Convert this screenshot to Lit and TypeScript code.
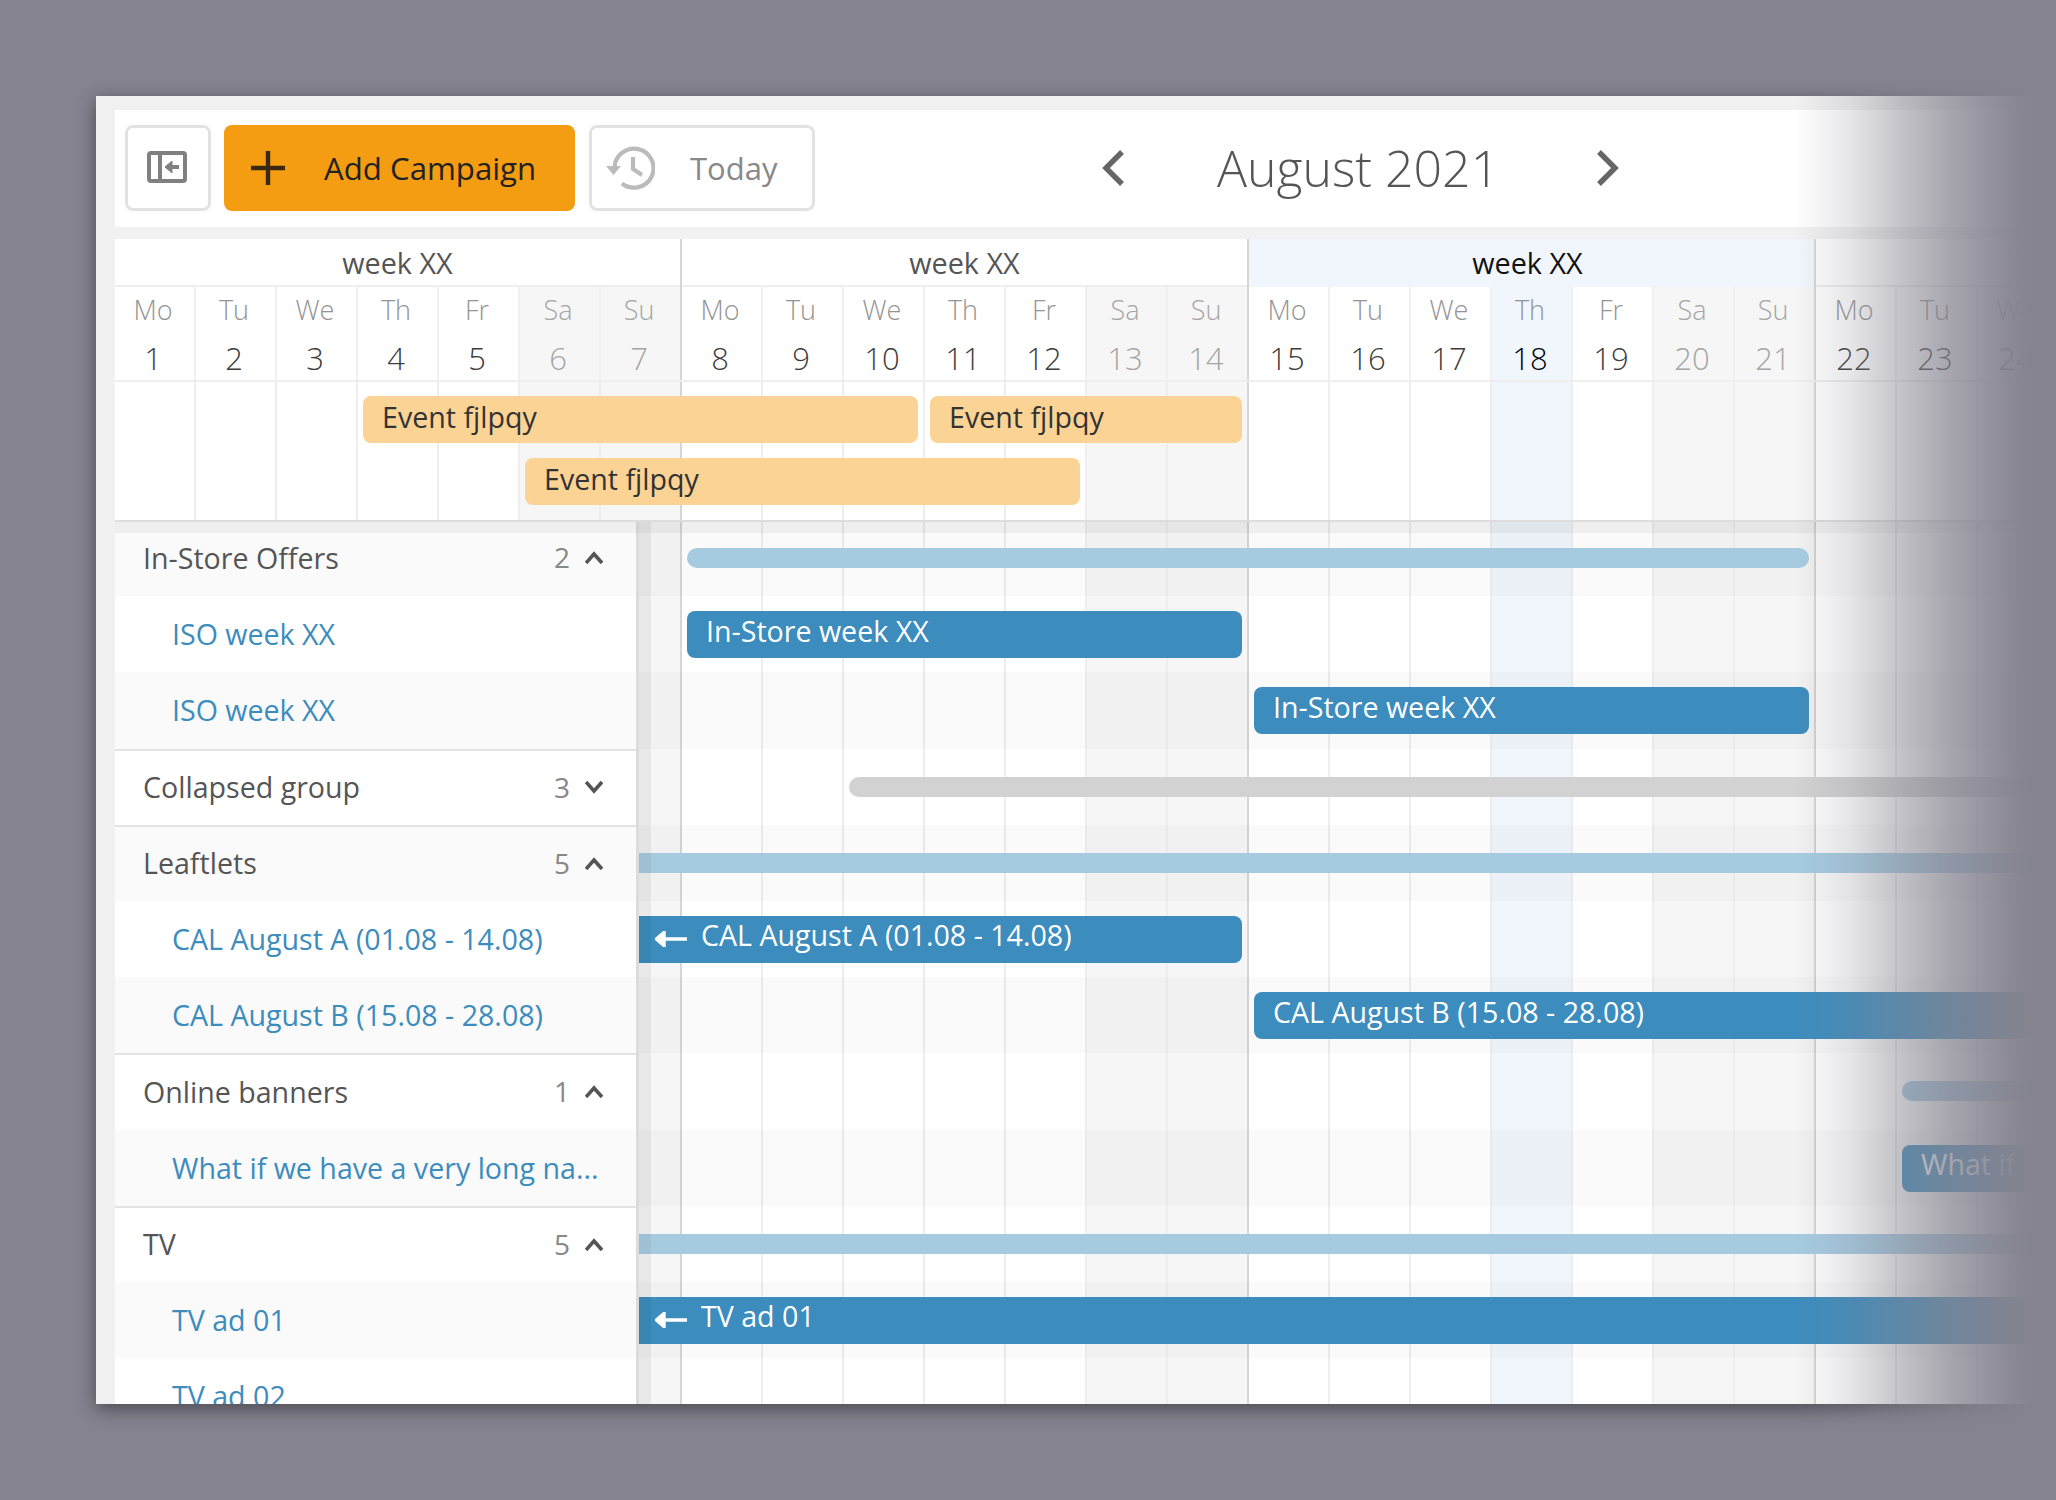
import { LitElement, html, css, svg } from "lit";
import { customElement } from "lit/decorators.js";
import { classMap } from "lit/directives/class-map.js";

const DOW = ["Mo", "Tu", "We", "Th", "Fr", "Sa", "Su"];
const DAYS = Array.from({ length: 24 }, (_, i) => ({
  n: i + 1,
  dow: DOW[i % 7],
  weekend: i % 7 >= 5,
  weekStart: i % 7 === 0 && i > 0,
  first: i === 0,
  today: i === 17,
}));

type Side = { label: string; count?: number; open?: boolean; group?: boolean };
const SIDE: Side[] = [
  { label: "In-Store Offers", count: 2, open: true, group: true },
  { label: "ISO week XX" },
  { label: "ISO week XX" },
  { label: "Collapsed group", count: 3, open: false, group: true },
  { label: "Leaftlets", count: 5, open: true, group: true },
  { label: "CAL August A (01.08 - 14.08)" },
  { label: "CAL August B (15.08 - 28.08)" },
  { label: "Online banners", count: 1, open: true, group: true },
  { label: "What if we have a very long na..." },
  { label: "TV", count: 5, open: true, group: true },
  { label: "TV ad 01" },
  { label: "TV ad 02" },
];

type Bar = { row: number; from: number; to: number; kind: string; label?: string; cut?: boolean; open?: boolean };
const BARS: Bar[] = [
  { row: 0, from: 7, to: 21, kind: "sum" },
  { row: 1, from: 7, to: 14, kind: "main", label: "In-Store week XX" },
  { row: 2, from: 14, to: 21, kind: "main", label: "In-Store week XX" },
  { row: 3, from: 9, to: 24, kind: "sum grey", open: true },
  { row: 4, from: 6, to: 24, kind: "sum", cut: true, open: true },
  { row: 5, from: 6, to: 14, kind: "main", label: "CAL August A (01.08 - 14.08)", cut: true },
  { row: 6, from: 14, to: 24, kind: "main", label: "CAL August B (15.08 - 28.08)", open: true },
  { row: 7, from: 22, to: 24, kind: "sum", open: true },
  { row: 8, from: 22, to: 24, kind: "main", label: "What if", open: true },
  { row: 9, from: 6, to: 24, kind: "sum", cut: true, open: true },
  { row: 10, from: 6, to: 24, kind: "main", label: "TV ad 01", cut: true, open: true },
];

const leftArrow = svg`<svg class="arrow" viewBox="0 0 32 16"><path d="M32 8H7M9 1.5 1.5 8 9 14.5z" fill="#fff" stroke="#fff" stroke-width="3.4"/></svg>`;

@customElement("app-root")
export class AppRoot extends LitElement {
  static styles = css`
    :host {
      display: block;
      position: relative;
      height: 1500px;
      overflow: hidden;
      background: #85838f;
      font-family: "Open Sans", "Liberation Sans", sans-serif;
      font-size: 28.6px;
      color: #555;
    }
    .page { padding: 96px 0 0 96px; }
    .card {
      box-sizing: border-box;
      width: 1960px;
      height: 1308px;
      padding: 14px 0 0 19px;
      background: #f1f1f1;
      overflow: hidden;
      box-shadow: 0 5px 18px rgba(0, 0, 0, 0.45);
    }
    .toolbar {
      box-sizing: border-box;
      display: flex;
      align-items: center;
      height: 117px;
      padding: 0 0 2px 10px;
      background: #fff;
    }
    .btn {
      box-sizing: border-box;
      display: flex;
      align-items: center;
      height: 86px;
      border: 3px solid #e2e2e2;
      border-radius: 8px;
      background: #fff;
    }
    .btn.icon { width: 86px; justify-content: center; padding: 0 2px 2px 0; margin-right: 13px; }
    .btn.add {
      width: 351px;
      margin-right: 14px;
      padding-left: 27px;
      border: 0;
      background: #f49d12;
      color: #222;
      font-size: 31.2px;
    }
    .btn.add span { margin-left: 39px; }
    .btn.today { width: 226px; padding-left: 13px; color: #888; font-size: 31px; }
    .btn.today span { margin-left: 35px; }
    .month {
      display: flex;
      align-items: center;
      margin-left: 286px;
    }
    .month .title {
      width: 275px;
      margin: 0 104px 0 92px;
      font-size: 50px;
      font-weight: 300;
      color: #555;
      white-space: nowrap;
      line-height: 60px;
    }
    .cal { margin-top: 12px; background: #fff; }
    .head { position: relative; z-index: 3; background: #fff; }
    .head::after {
      content: "";
      position: absolute;
      left: 0;
      right: 0;
      top: 100%;
      height: 11px;
      background: rgba(0, 0, 0, 0.045);
    }
    .weeks {
      display: grid;
      grid-template-columns: 565px repeat(3, 567px);
      height: 48px;
      box-sizing: border-box;
      border-bottom: 2px solid #eee;
    }
    .week {
      box-sizing: border-box;
      text-align: center;
      line-height: 48px;
      font-size: 28.8px;
      color: #555;
      white-space: nowrap;
    }
    .week.line { border-left: 2px solid #d6d6d6; }
    .week.cur { background: #f1f6fd; color: #111; padding-right: 8px; }
    .cols28 {
      display: grid;
      grid-template-columns: 79px repeat(23, 81px);
    }
    .days {
      height: 95px;
      box-sizing: border-box;
      border-bottom: 2px solid #eee;
    }
    .day {
      box-sizing: border-box;
      display: flex;
      flex-direction: column;
      align-items: center;
      padding-right: 3px;
      border-left: 2px solid #f0f0f0;
    }
    .day .dow { font-size: 27px; line-height: 36px; margin-top: 5px; color: #949494; font-weight: 300; }
    .day .num { font-size: 31px; line-height: 40px; margin-top: 10px; color: #3c3c3c; font-weight: 350; }
    .day.we { background: #f6f6f6; }
    .day.we .dow, .day.we .num { color: #a5a5a5; }
    .day.today { background: #f1f6fd; }
    .day.today .num { color: #000; }
    .day.first, .col.first { border-left: 0; }
    .day.ws, .col.ws { border-left: 2px solid #d6d6d6; }
    .col {
      box-sizing: border-box;
      grid-row: 1 / -1;
      border-left: 2px solid #eee;
    }
    .col.we { background: #f6f6f6; }
    .col.today { background: #f1f6fd; }
    .events {
      grid-template-rows: 62px 76px;
      height: 140px;
      box-sizing: border-box;
      border-bottom: 2px solid #ddd;
    }
    .ev {
      display: flex;
      align-items: center;
      box-sizing: border-box;
      height: 47px;
      margin: 14px 5px 0 7px;
      padding: 0 20px 6px 19px;
      border-radius: 8px;
      background: #fbd394;
      color: #333;
      align-self: start;
      white-space: nowrap;
      z-index: 1;
    }
    .body {
      margin-top: -2px;
      grid-template-rows: repeat(12, 76.2px);
    }
    .stripe {
      grid-column: 1 / -1;
      background: rgba(0, 0, 0, 0.02);
    }
    .bar {
      align-self: start;
      box-sizing: border-box;
      margin: 15px 5px 0 7px;
      height: 47px;
      display: flex;
      align-items: center;
      padding: 0 20px 9px 19px;
      border-radius: 8px;
      background: #3c8cbd;
      color: #fff;
      white-space: nowrap;
      overflow: hidden;
      z-index: 1;
    }
    .bar.sum {
      margin-top: 28px;
      height: 20px;
      padding: 0;
      border-radius: 10px;
      background: #a6cbe1;
    }
    .bar.grey { background: #d2d2d2; }
    .bar.cut {
      margin-left: 39px;
      border-top-left-radius: 0;
      border-bottom-left-radius: 0;
      padding-left: 17px;
    }
    .bar.open { margin-right: 0; border-top-right-radius: 0; border-bottom-right-radius: 0; }
    .arrow { flex: none; width: 32px; height: 16px; margin: 9px 14px 0 0; }
    .side {
      grid-row: 1 / -1;
      grid-column: 1 / 8;
      width: 524px;
      box-sizing: border-box;
      position: relative;
      display: grid;
      grid-template-rows: repeat(12, 76.2px);
      border-right: 3px solid #dcdcdc;
      background: #fff;
      z-index: 2;
    }
    .side::after {
      content: "";
      position: absolute;
      left: 100%;
      top: 0;
      bottom: 0;
      width: 12px;
      margin-left: 3px;
      background: rgba(0, 0, 0, 0.05);
    }
    .row {
      box-sizing: border-box;
      display: flex;
      align-items: center;
      padding: 0 0 1px 57px;
      min-width: 0;
      color: #3c8cbd;
    }
    .row.z { background: #fafafa; }
    .row.group { padding: 0 31px 2px 28px; color: #555; }
    .row.sep { border-top: 2px solid #e2e2e2; }
    .row .text { flex: 1; white-space: nowrap; }
    .count { color: #888; margin-right: 15px; font-size: 28px; }
    .chev { display: block; }
    .fade {
      position: absolute;
      top: 0;
      bottom: 0;
      left: 1790px;
      right: 0;
      z-index: 9;
      background: linear-gradient(
        to right,
        rgba(133, 131, 143, 0) 5px,
        rgba(133, 131, 143, 0.2) 60px,
        rgba(133, 131, 143, 0.48) 110px,
        rgba(133, 131, 143, 0.72) 160px,
        rgba(133, 131, 143, 0.93) 215px,
        rgba(133, 131, 143, 1) 242px
      );
    }
  `;

  private colCells() {
    return DAYS.map(
      (d, i) => html`<div
        class=${classMap({ col: true, we: d.weekend, ws: d.weekStart, first: d.first, today: d.today })}
        style="grid-column:${i + 1}"
      ></div>`
    );
  }

  render() {
    return html`
      <div class="page">
        <div class="card">
          <div class="toolbar">
            <div class="btn icon">
              <svg width="40" height="32" viewBox="0 0 40 32" fill="none" stroke="#808080" stroke-width="4">
                <rect x="2" y="2" width="36" height="28" rx="2" />
                <path d="M13 2v28" />
                <path d="M32 16H20" />
                <path d="M25 10l-7 6 7 6z" fill="#808080" stroke-width="1" />
              </svg>
            </div>
            <div class="btn add">
              <svg width="34" height="34" viewBox="0 0 34 34" stroke="#3a2a10" stroke-width="4.4"><path d="M17 0v34M0 17h34" /></svg>
              <span>Add Campaign</span>
            </div>
            <div class="btn today">
              <svg width="50" height="44" viewBox="0 0 50 44" fill="none" stroke="#bbb" stroke-width="4.2">
                <path d="M9.5 22A19.5 19.5 0 1 1 17 37.5" />
                <path d="M1 20h15l-7.5 9z" fill="#bbb" stroke="none" />
                <path d="M28 11v12l9 6" />
              </svg>
              <span>Today</span>
            </div>
            <div class="month">
              <svg width="24" height="36" viewBox="0 0 24 36" fill="none" stroke="#666" stroke-width="5.4"><path d="M21 2 5 18l16 16" /></svg>
              <div class="title">August 2021</div>
              <svg width="24" height="36" viewBox="0 0 24 36" fill="none" stroke="#666" stroke-width="5.4"><path d="M3 2l16 16L3 34" /></svg>
            </div>
          </div>
          <div class="cal">
            <div class="head">
              <div class="weeks">
                <div class="week">week XX</div>
                <div class="week line">week XX</div>
                <div class="week line cur">week XX</div>
                <div class="week line"></div>
              </div>
              <div class="cols28 days">
                ${DAYS.map(
                  (d) => html`<div class=${classMap({ day: true, we: d.weekend, ws: d.weekStart, first: d.first, today: d.today })}>
                    <span class="dow">${d.dow}</span><span class="num">${d.n}</span>
                  </div>`
                )}
              </div>
              <div class="cols28 events">
                ${this.colCells()}
                <div class="ev" style="grid-column:4 / 11;grid-row:1">Event fjlpqy</div>
                <div class="ev" style="grid-column:11 / 15;grid-row:1">Event fjlpqy</div>
                <div class="ev" style="grid-column:6 / 13;grid-row:2">Event fjlpqy</div>
              </div>
            </div>
            <div class="cols28 body">
              ${this.colCells()}
              ${SIDE.map((_, i) => (i % 2 === 0 ? html`<div class="stripe" style="grid-row:${i + 1}"></div>` : null))}
              ${BARS.map(
                (b) => html`<div
                  class="bar ${b.kind} ${b.cut ? "cut" : ""} ${b.open ? "open" : ""}"
                  style="grid-row:${b.row + 1};grid-column:${b.from + 1} / ${b.to + 1}"
                >
                  ${b.cut && b.label ? leftArrow : null}${b.label ?? ""}
                </div>`
              )}
              <div class="side">
                ${SIDE.map(
                  (s, i) => html`<div class=${classMap({ row: true, group: !!s.group, z: i % 2 === 0, sep: !!s.group && i > 0 })}>
                    <span class="text">${s.label}</span>
                    ${s.group
                      ? html`<span class="count">${s.count}</span>
                          <svg class="chev" width="20" height="14" viewBox="0 0 20 14" fill="none" stroke="#555" stroke-width="3.6">
                            <path d=${s.open ? "M1 13l8-9 8 9" : "M1 2l8 9 8-9"} />
                          </svg>`
                      : null}
                  </div>`
                )}
              </div>
            </div>
          </div>
        </div>
      </div>
      <div class="fade"></div>
    `;
  }
}
